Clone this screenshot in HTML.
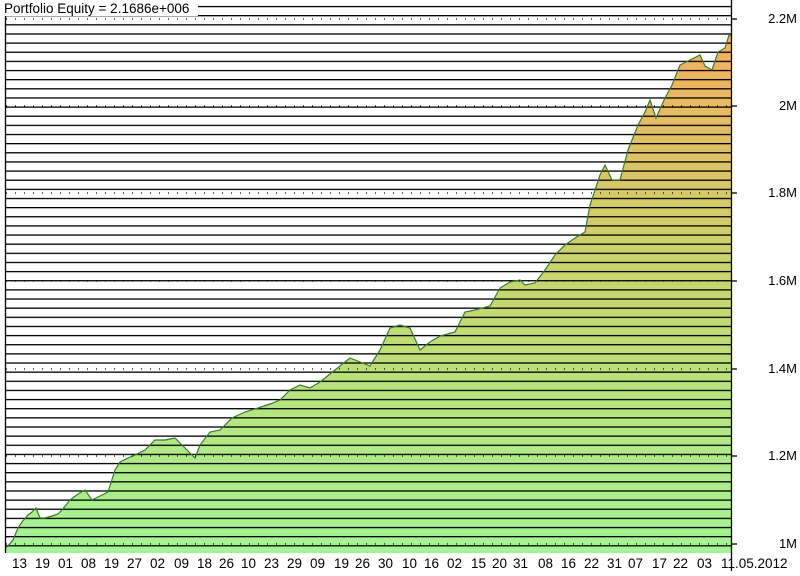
<!DOCTYPE html>
<html><head><style>
body{margin:0;width:800px;height:571px;background:#fff;overflow:hidden;font-family:"Liberation Sans",sans-serif}
</style></head><body>
<svg width="800" height="571" xmlns="http://www.w3.org/2000/svg" font-family="Liberation Sans, sans-serif">
<defs>
<linearGradient id="g" gradientUnits="userSpaceOnUse" x1="0" y1="30" x2="0" y2="553">
<stop offset="0" stop-color="#f6ae5e"/><stop offset="0.45" stop-color="#c9d46c"/><stop offset="1" stop-color="#a2f594"/></linearGradient>
<pattern id="hl" patternUnits="userSpaceOnUse" x="0" y="5.9" width="800" height="9.14">
<rect x="0" y="0" width="800" height="1.3" fill="#000"/>
</pattern>
</defs>
<polygon fill="url(#g)" points="6,553 6,548 13,540 18,528 22,522 28,515 32,512 36,508 40,518 45,518 52,516 58,514 62,510 70,500 78,494 85,490 92,500 100,496 108,492 115,470 120,462 128,458 135,455 145,450 155,440 165,440 175,438 185,448 195,458 200,445 210,432 220,430 232,418 245,412 258,408 270,404 280,400 290,390 300,385 310,388 320,382 330,374 340,366 350,358 360,362 370,366 380,350 390,328 400,325 410,328 420,350 430,342 440,336 455,332 465,312 475,310 490,306 500,288 510,282 520,280 525,285 535,283 545,270 555,255 565,245 575,238 585,232 590,205 600,175 605,165 612,180 620,180 628,150 638,125 645,112 650,100 656,118 665,98 672,85 680,65 690,60 700,55 705,66 712,70 718,52 725,48 729,35 731,35 731,553"/>
<rect x="6" y="0" width="725" height="553" fill="url(#hl)"/>
<polyline fill="none" stroke="#3a7a30" stroke-width="1.2" points="6,548 13,540 18,528 22,522 28,515 32,512 36,508 40,518 45,518 52,516 58,514 62,510 70,500 78,494 85,490 92,500 100,496 108,492 115,470 120,462 128,458 135,455 145,450 155,440 165,440 175,438 185,448 195,458 200,445 210,432 220,430 232,418 245,412 258,408 270,404 280,400 290,390 300,385 310,388 320,382 330,374 340,366 350,358 360,362 370,366 380,350 390,328 400,325 410,328 420,350 430,342 440,336 455,332 465,312 475,310 490,306 500,288 510,282 520,280 525,285 535,283 545,270 555,255 565,245 575,238 585,232 590,205 600,175 605,165 612,180 620,180 628,150 638,125 645,112 650,100 656,118 665,98 672,85 680,65 690,60 700,55 705,66 712,70 718,52 725,48 729,35 731,35"/>
<g stroke="#000" stroke-width="1.3" stroke-dasharray="1 8">
<line x1="6" x2="731" y1="19" y2="19"/><line x1="6" x2="731" y1="106" y2="106"/><line x1="6" x2="731" y1="193" y2="193"/><line x1="6" x2="731" y1="281" y2="281"/><line x1="6" x2="731" y1="369" y2="369"/><line x1="6" x2="731" y1="456" y2="456"/><line x1="6" x2="731" y1="544" y2="544"/>
</g>
<g stroke="#000" stroke-width="1.3">
<line x1="5.5" y1="0" x2="5.5" y2="553"/><line x1="731.5" y1="0" x2="731.5" y2="571"/>
<line x1="731" x2="737" y1="19" y2="19"/><line x1="731" x2="737" y1="106" y2="106"/><line x1="731" x2="737" y1="193" y2="193"/><line x1="731" x2="737" y1="281" y2="281"/><line x1="731" x2="737" y1="369" y2="369"/><line x1="731" x2="737" y1="456" y2="456"/><line x1="731" x2="737" y1="544" y2="544"/>
</g>
<rect x="2" y="0" width="196" height="16" fill="#fff"/>
<text x="4" y="13" font-size="13.5" fill="#000">Portfolio Equity = 2.1686e+006</text>
<g font-size="13" text-anchor="end" fill="#000">
<text x="797" y="23">2.2M</text><text x="797" y="110">2M</text><text x="797" y="197">1.8M</text><text x="797" y="285">1.6M</text><text x="797" y="373">1.4M</text><text x="797" y="460">1.2M</text><text x="797" y="548">1M</text>
</g>
<g font-size="13.5" fill="#000">
<text x="12" y="568">13</text><text x="35" y="568">19</text><text x="58" y="568">01</text><text x="81" y="568">08</text><text x="104" y="568">19</text><text x="127" y="568">27</text><text x="150" y="568">02</text><text x="174" y="568">09</text><text x="197" y="568">18</text><text x="219" y="568">26</text><text x="241" y="568">10</text><text x="264" y="568">23</text><text x="287" y="568">29</text><text x="310" y="568">09</text><text x="334" y="568">19</text><text x="355" y="568">26</text><text x="378" y="568">30</text><text x="402" y="568">10</text><text x="424" y="568">16</text><text x="447" y="568">02</text><text x="471" y="568">15</text><text x="492" y="568">20</text><text x="513" y="568">31</text><text x="538" y="568">08</text><text x="561" y="568">16</text><text x="584" y="568">22</text><text x="607" y="568">31</text><text x="628" y="568">07</text><text x="652" y="568">17</text><text x="673" y="568">22</text><text x="697" y="568">03</text><text x="721" y="568">11.05.2012</text>
</g>
</svg>
</body></html>
